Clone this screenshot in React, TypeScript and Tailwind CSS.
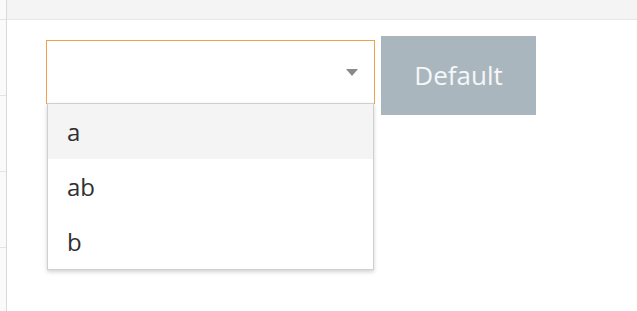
import React from 'react';

const options = ['a', 'ab', 'b'];

export default function App() {
  return (
    <div className="flex w-[637px] h-[311px] overflow-hidden bg-white font-['Open_Sans',sans-serif]">
      {/* left rail */}
      <div className="w-[7px] shrink-0 border-r border-[#d9d9d9] bg-[#fafafa]">
        <div className="h-[20px] border-b border-[#e4e4e4]" />
        <div className="h-[76px] border-b border-[#e4e4e4]" />
        <div className="h-[76px] border-b border-[#e4e4e4]" />
        <div className="h-[76px] border-b border-[#e4e4e4]" />
      </div>

      <div className="flex-1 flex flex-col">
        <div className="h-[20px] bg-[#f4f4f4] border-b border-[#e6e6e6]" />

        <div className="flex items-start pl-[39px] pt-[16px]">
          <div className="relative mt-[4px]">
            <div className="w-[329px] h-[64px] border border-[#f0a04b] bg-white flex items-center justify-end pr-[16px]">
              <svg width="12" height="7" viewBox="0 0 12 7">
                <path d="M0 0 L12 0 L6 7 Z" fill="#8a8a8a" />
              </svg>
            </div>
            <ul className="absolute left-[1px] right-[1px] top-[63px] bg-white border border-[#cfcfcf] shadow-[0_2px_4px_rgba(0,0,0,0.18)]">
              {options.map((o, i) => (
                <li
                  key={o}
                  className={`h-[55px] flex items-center pl-[19px] text-[24px] text-[#2f2f2f] ${i === 0 ? 'bg-[#f4f4f4]' : ''}`}
                >
                  {o}
                </li>
              ))}
            </ul>
          </div>

          <button className="ml-[6px] w-[155px] h-[79px] bg-[#aab6be] text-[#f5f7f8] text-[26px] flex items-center justify-center">
            Default
          </button>
        </div>
      </div>
    </div>
  );
}
